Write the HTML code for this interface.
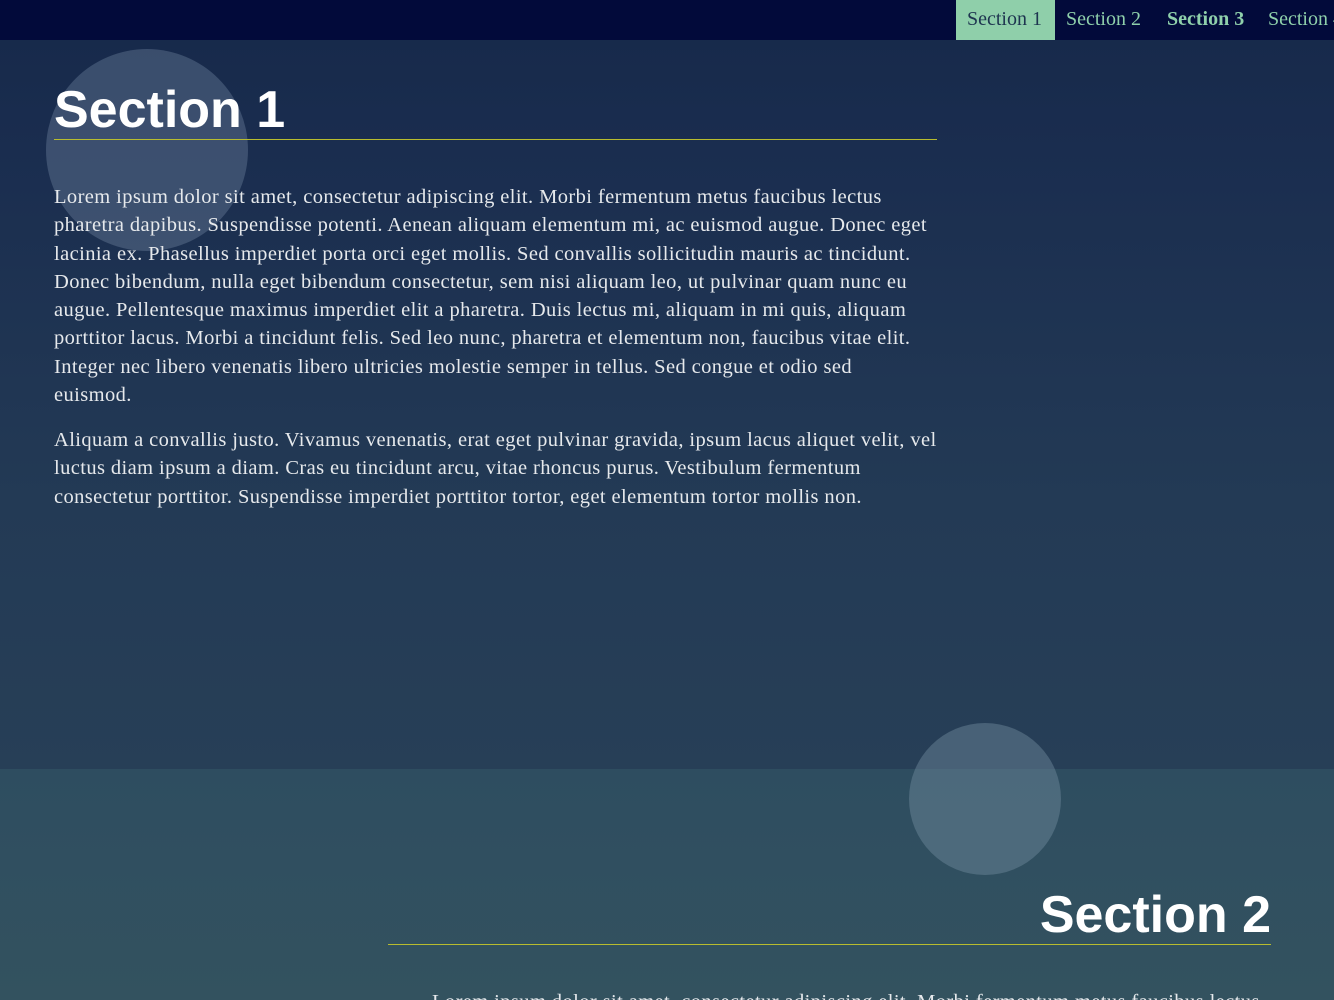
<!DOCTYPE html>
<html><head><meta charset="utf-8"><style>
*{margin:0;padding:0;box-sizing:border-box}
html,body{width:1334px;height:1000px;overflow:hidden}
body{position:relative;font-family:"Liberation Serif",serif;color:#e8ecef;background:#30505f}
.s1{position:absolute;left:0;top:0;width:1334px;height:769px;background:linear-gradient(#172a4b 40px,#1a2d4f 150px,#233a55 500px,#273f57 769px)}
.s2{position:absolute;left:0;top:769px;width:1334px;height:231px;background:linear-gradient(#2e4d60,#33525f)}
nav{position:absolute;left:0;top:0;width:1334px;height:40px;background:#020a3a}
nav span{position:absolute;top:0;height:40px;line-height:38px;font-size:20px;color:#8fd0ab;white-space:nowrap}
.circ{position:absolute;border-radius:50%;background:rgba(140,160,185,0.30)}
h1{position:absolute;font-family:"Liberation Sans",sans-serif;font-weight:bold;font-size:52px;color:#fff;line-height:1;white-space:nowrap}
.hr{position:absolute;height:1px;background:#b8bc2e}
.p{position:absolute;left:54px;font-size:20.5px;letter-spacing:0.4px;line-height:28.3px;white-space:nowrap;color:#e6e9ec}
</style></head><body>
<div class="s1"></div>
<div class="s2"></div>
<div class="circ" style="left:46px;top:49px;width:202px;height:202px"></div>
<div class="circ" style="left:909px;top:723px;width:152px;height:152px;background:rgba(120,145,165,0.42)"></div>
<nav>
<span style="left:956px;width:99px;background:#8fcfaa;color:#1e3550;padding-left:11px">Section 1</span>
<span style="left:1066px">Section 2</span>
<span style="left:1167px;font-weight:bold">Section 3</span>
<span style="left:1268px">Section 4</span>
</nav>
<h1 style="left:54px;top:84px">Section 1</h1>
<div class="hr" style="left:54px;top:139px;width:883px"></div>
<div class="p" style="top:183px">Lorem ipsum dolor sit amet, consectetur adipiscing elit. Morbi fermentum metus faucibus lectus<br>pharetra dapibus. Suspendisse potenti. Aenean aliquam elementum mi, ac euismod augue. Donec eget<br>lacinia ex. Phasellus imperdiet porta orci eget mollis. Sed convallis sollicitudin mauris ac tincidunt.<br>Donec bibendum, nulla eget bibendum consectetur, sem nisi aliquam leo, ut pulvinar quam nunc eu<br>augue. Pellentesque maximus imperdiet elit a pharetra. Duis lectus mi, aliquam in mi quis, aliquam<br>porttitor lacus. Morbi a tincidunt felis. Sed leo nunc, pharetra et elementum non, faucibus vitae elit.<br>Integer nec libero venenatis libero ultricies molestie semper in tellus. Sed congue et odio sed<br>euismod.</div>
<div class="p" style="top:426px">Aliquam a convallis justo. Vivamus venenatis, erat eget pulvinar gravida, ipsum lacus aliquet velit, vel<br>luctus diam ipsum a diam. Cras eu tincidunt arcu, vitae rhoncus purus. Vestibulum fermentum<br>consectetur porttitor. Suspendisse imperdiet porttitor tortor, eget elementum tortor mollis non.</div>
<h1 style="right:63px;top:889px">Section 2</h1>
<div class="hr" style="left:388px;top:944px;width:883px"></div>
<div class="p" style="left:432px;top:988px">Lorem ipsum dolor sit amet, consectetur adipiscing elit. Morbi fermentum metus faucibus lectus</div>
</body></html>
